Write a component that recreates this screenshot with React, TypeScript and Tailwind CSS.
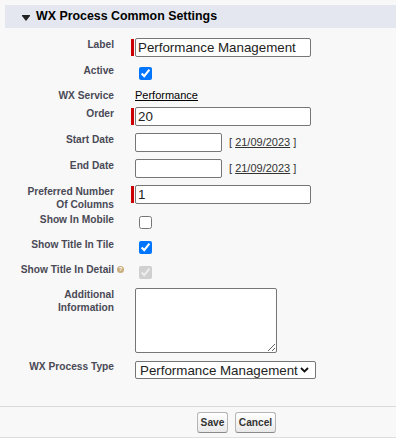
import React from "react";

const labelCls =
  "w-[114px] shrink-0 text-right font-bold text-[10.2px] leading-[13px] text-[#4a4a56]";
const inputCls =
  "block h-[19px] border border-[#767676] rounded-[2px] bg-white px-[2px] text-[13.33px] leading-[15px] text-[#222] outline-none";

function Row({
  label,
  mt,
  pt = "",
  children,
}: {
  label: React.ReactNode;
  mt: string;
  pt?: string;
  children: React.ReactNode;
}) {
  return (
    <div className={"flex items-start " + mt}>
      <div className={labelCls}>{label}</div>
      <div className={"ml-[17px] leading-none " + pt}>{children}</div>
    </div>
  );
}

function Required({ children }: { children: React.ReactNode }) {
  return (
    <div className="flex">
      <div className="w-[3px] my-[1px] bg-[#c00]" />
      <div className="ml-[1px]">{children}</div>
    </div>
  );
}

function DateField() {
  return (
    <div className="flex items-center pl-[4px]">
      <input type="text" className={inputCls + " w-[87px]"} />
      <span className="ml-[7px] text-[11px] leading-[13px] text-[#333]">
        [ <a className="underline cursor-pointer">21/09/2023</a> ]
      </span>
    </div>
  );
}

export default function App() {
  return (
    <div className="w-[396px] h-[444px] bg-white font-['Liberation_Sans',Arial,sans-serif]">
      <div className="bg-[#f8f8f8] pt-[5px] border-b border-[#dedede]">
        <div className="ml-[5px] h-[23px] bg-[#e4e7ef] flex items-center pl-[17px]">
          <svg width="8" height="6" viewBox="0 0 8 6" className="mt-[3px]">
            <rect x="0" y="0" width="8" height="1" fill="#222" />
            <polygon points="0,1 8,1 4,6" fill="#222" />
          </svg>
          <span className="ml-[6px] font-bold text-[12.4px] text-black">
            WX Process Common Settings
          </span>
        </div>

        <div className="pt-[10px] pb-[27px]">
          <Row label="Label" mt="">
            <Required>
              <input
                type="text"
                defaultValue="Performance Management"
                className={inputCls + " w-[176px] bg-[#e8f0fe]"}
              />
            </Required>
          </Row>

          <Row label="Active" mt="mt-[7px]" pt="pt-[3px] pl-[8px]">
            <input type="checkbox" defaultChecked className="m-0 block w-[13px] h-[13px]" />
          </Row>

          <Row label="WX Service" mt="mt-[9px]" pt="pl-[4px]">
            <a className="block text-[11px] leading-[13px] text-black underline cursor-pointer">
              Performance
            </a>
          </Row>

          <Row label="Order" mt="mt-[5px]">
            <Required>
              <input type="text" defaultValue="20" className={inputCls + " w-[176px]"} />
            </Required>
          </Row>

          <Row label="Start Date" mt="mt-[7px]">
            <DateField />
          </Row>

          <Row label="End Date" mt="mt-[7px]">
            <DateField />
          </Row>

          <Row
            label={
              <>
                Preferred Number
                <br />
                Of Columns
              </>
            }
            mt="mt-[7px]"
          >
            <Required>
              <input type="text" defaultValue="1" className={inputCls + " w-[176px]"} />
            </Required>
          </Row>

          <Row label="Show In Mobile" mt="mt-[2px]" pt="pt-[3px] pl-[8px]">
            <input type="checkbox" className="m-0 block w-[13px] h-[13px]" />
          </Row>

          <Row label="Show Title In Tile" mt="mt-[9px]" pt="pt-[3px] pl-[8px]">
            <input type="checkbox" defaultChecked className="m-0 block w-[13px] h-[13px]" />
          </Row>

          <Row
            label={
              <span className="relative">
                Show Title In Detail
                <span className="absolute left-full top-[2px] ml-[3px] w-[7px] h-[7px] rounded-full bg-[#c9ad7c] text-white text-[6px] leading-[7px] text-center font-bold">
                  ?
                </span>
              </span>
            }
            mt="mt-[9px]"
            pt="pt-[3px] pl-[8px]"
          >
            <input
              type="checkbox"
              defaultChecked
              disabled
              className="m-0 block w-[13px] h-[13px]"
            />
          </Row>

          <Row
            label={
              <>
                Additional
                <br />
                Information
              </>
            }
            mt="mt-[9px]"
            pt="pl-[4px]"
          >
            <textarea className="block w-[142px] h-[65px] border border-[#767676] rounded-[2px] bg-white resize outline-none" />
          </Row>

          <Row label="WX Process Type" mt="mt-[7px]" pt="pt-[1px] pl-[4px]">
            <div className="relative w-[181px]">
              <select className="block appearance-none w-[181px] h-[18px] border border-[#767676] rounded-[2px] bg-white pl-[4px] text-[13.33px] leading-[15px] text-[#222] outline-none">
                <option>Performance Management</option>
              </select>
              <svg
                width="9"
                height="6"
                viewBox="0 0 9 6"
                className="absolute right-[7px] top-[6px] pointer-events-none"
              >
                <path d="M1 1l3.5 3.5L8 1" fill="none" stroke="#111" strokeWidth="1.8" />
              </svg>
            </div>
          </Row>
        </div>

        <div className="border-t border-[#dbdbdb] pt-[5px] pb-[4px] pl-[197px] flex gap-[7px]">
          <button className="w-[31px] h-[21px] border border-[#b5b5b5] border-b-[#8a8a8a] rounded-[3px] bg-linear-to-b from-white to-[#e9e9e9] text-[10.2px] font-bold text-[#333]">
            Save
          </button>
          <button className="w-[41px] h-[21px] border border-[#b5b5b5] border-b-[#8a8a8a] rounded-[3px] bg-linear-to-b from-white to-[#e9e9e9] text-[10.2px] font-bold text-[#333]">
            Cancel
          </button>
        </div>
      </div>
    </div>
  );
}
